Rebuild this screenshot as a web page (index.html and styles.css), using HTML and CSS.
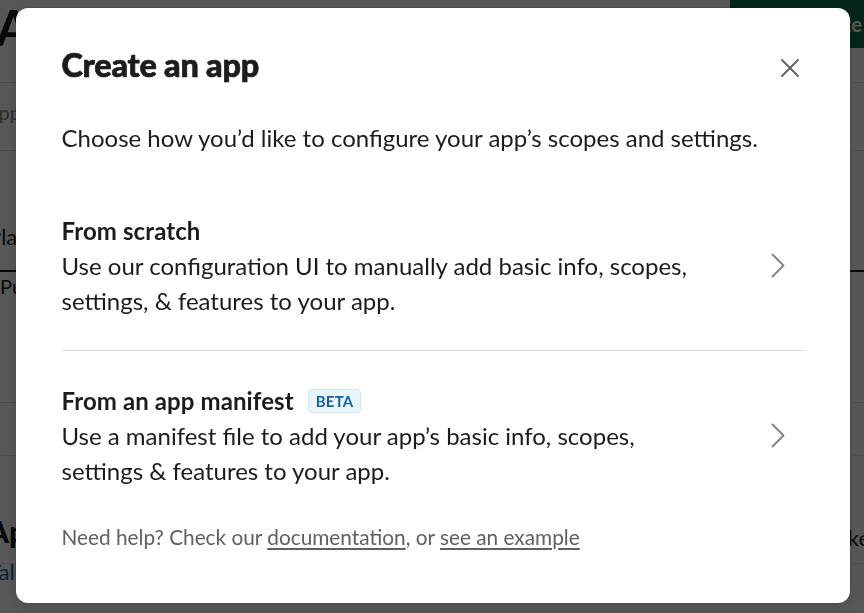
FILE: index.html
```html
<!DOCTYPE html>
<html lang="en">
<head>
    <meta charset="UTF-8">
    <title>Create an app</title>
    <link rel="stylesheet" href="styles.css">
</head>
<body>
<!-- page under the dialog -->
<div class="page">
    <div class="page-top">
        <h1 class="page-title">Apps</h1>
        <span class="btn-green">Create</span>
    </div>
    <div class="page-search">
        <span class="search-text">Apps</span>
    </div>
    <div class="page-thead">
        <span class="th">Plan</span>
    </div>
    <div class="page-row">
        <span class="row-name">Public</span>
    </div>
    <div class="page-row short"></div>
    <div class="page-section">
        <div class="section-line">
            <h2 class="section-title">Apps</h2>
            <span class="section-side">Make</span>
        </div>
        <a class="section-link">Tall apps</a>
    </div>
</div>

<!-- dialog -->
<div class="overlay">
    <div class="modal">
        <div class="modal-head">
            <h2 class="modal-title">Create an app</h2>
            <span class="close-btn">
                <svg width="18" height="18" viewBox="0 0 18 18"><path d="M1 1L17 17M17 1L1 17" stroke="#616061" stroke-width="1.8" stroke-linecap="round"/></svg>
            </span>
        </div>
        <p class="modal-desc">Choose how you’d like to configure your app’s scopes and settings.</p>

        <div class="option first">
            <div class="option-text">
                <div class="option-title">From scratch</div>
                <div class="option-body">Use our configuration UI to manually add basic info, scopes, settings, &amp; features to your app.</div>
            </div>
            <svg class="chevron" width="14" height="25" viewBox="0 0 14 25"><path d="M1.5 1.5L12.5 12.5L1.5 23.5" fill="none" stroke="#868686" stroke-width="2" stroke-linecap="round" stroke-linejoin="round"/></svg>
        </div>
        <div class="option">
            <div class="option-text">
                <div class="option-title">From an app manifest <span class="badge">BETA</span></div>
                <div class="option-body">Use a manifest file to add your app’s basic info, scopes, settings &amp; features to your app.</div>
            </div>
            <svg class="chevron" width="14" height="25" viewBox="0 0 14 25"><path d="M1.5 1.5L12.5 12.5L1.5 23.5" fill="none" stroke="#868686" stroke-width="2" stroke-linecap="round" stroke-linejoin="round"/></svg>
        </div>

        <p class="modal-foot">Need help? Check our <a>documentation</a>, or <a>see an example</a></p>
    </div>
</div>
</body>
</html>
```

FILE: styles.css
```css
* {
    box-sizing: border-box;
}
body {
    margin: 0;
    background: #fff;
    font-family: "Lato", "Liberation Sans", sans-serif;
    color: #1d1c1d;
    overflow: hidden;
}

/* page behind */
.page {
    margin-left: -12px;
    width: 890px;
}
.page-top {
    height: 83px;
    border-bottom: 1px solid #ddd;
    display: flex;
    justify-content: space-between;
    align-items: flex-start;
}
.page-title {
    margin: 0 0 0 8px;
    font-size: 50px;
    font-weight: 700;
    line-height: 54px;
}
.btn-green {
    width: 148px;
    height: 48px;
    background: #0e6e4a;
    color: #fff;
    font-weight: 700;
    font-size: 20px;
    line-height: 48px;
    padding-right: 16px;
    text-align: right;
    white-space: nowrap;
    overflow: hidden;
}
.page-search {
    height: 68px;
    border-bottom: 1px solid #ddd;
    display: flex;
    align-items: center;
    padding-bottom: 10px;
    font-size: 20px;
    color: #868686;
}
.search-text {
    margin-left: -3px;
}
.page-thead {
    height: 121px;
    border-bottom: 2px solid #1d1c1d;
    display: flex;
    align-items: flex-end;
    padding-bottom: 20px;
    font-size: 22px;
}
.page-row {
    height: 131px;
    border-bottom: 1px solid #ddd;
    padding: 2px 0 0 12px;
    font-size: 20px;
}
.page-row.short {
    height: 53px;
}
.page-section {
    padding-top: 54px;
}
.section-line {
    display: flex;
    justify-content: space-between;
    align-items: center;
    border-bottom: 1px solid #ddd;
    padding-bottom: 12px;
}
.section-title {
    margin: 0;
    font-size: 30px;
    font-weight: 900;
}
.section-side {
    font-size: 22px;
    padding-right: 8px;
    padding-top: 14px;
}
.section-link {
    display: block;
    color: #1264a3;
    font-size: 22px;
    margin-top: -6px;
}

/* dialog */
.overlay {
    position: fixed;
    top: 0;
    left: 0;
    right: 0;
    bottom: 0;
    background: rgba(0, 0, 0, 0.66);
    display: flex;
    justify-content: center;
    align-items: flex-start;
}
.modal {
    width: 834px;
    margin: 8px 0 0 1px;
    background: #fff;
    border-radius: 12px;
    padding: 39px 44px 51px 46px;
    box-shadow: 0 0 0 1px rgba(0, 0, 0, 0.08), 0 4px 12px rgba(0, 0, 0, 0.12);
}
.modal-head {
    display: flex;
    justify-content: space-between;
    align-items: center;
    height: 36px;
}
.modal-title {
    margin: 0;
    font-size: 32.4px;
    font-weight: 900;
    line-height: 36px;
    letter-spacing: -0.2px;
    -webkit-text-stroke: 0.7px #1d1c1d;
}
.close-btn {
    width: 32px;
    height: 32px;
    margin-top: 6px;
    display: flex;
    align-items: center;
    justify-content: center;
}
.modal-desc {
    margin: 37px 0 0 0;
    font-size: 24px;
    line-height: 35px;
}
.option {
    display: flex;
    align-items: center;
    padding: 32px 0;
}
.option.first {
    margin-top: 26px;
    border-bottom: 1px solid #ddd;
}
.option-text {
    flex: 1;
    max-width: 650px;
    font-size: 24px;
    line-height: 35px;
}
.option-title {
    font-weight: 700;
    display: flex;
    align-items: center;
    letter-spacing: 0.1px;
}
.badge {
    margin-left: 14px;
    height: 24px;
    padding: 0 7px;
    border: 1px solid #cde7f3;
    background: #e8f5fa;
    border-radius: 4px;
    color: #1264a3;
    font-size: 15px;
    font-weight: 700;
    line-height: 22px;
    letter-spacing: 0.2px;
}
.chevron {
    margin-left: auto;
    margin-right: 21px;
}
.modal-foot {
    margin: 2px 0 0 0;
    font-size: 20.8px;
    line-height: 30px;
    color: #616061;
}
.modal-foot a {
    color: #616061;
    text-decoration: underline;
    text-underline-offset: 3px;
}
```
